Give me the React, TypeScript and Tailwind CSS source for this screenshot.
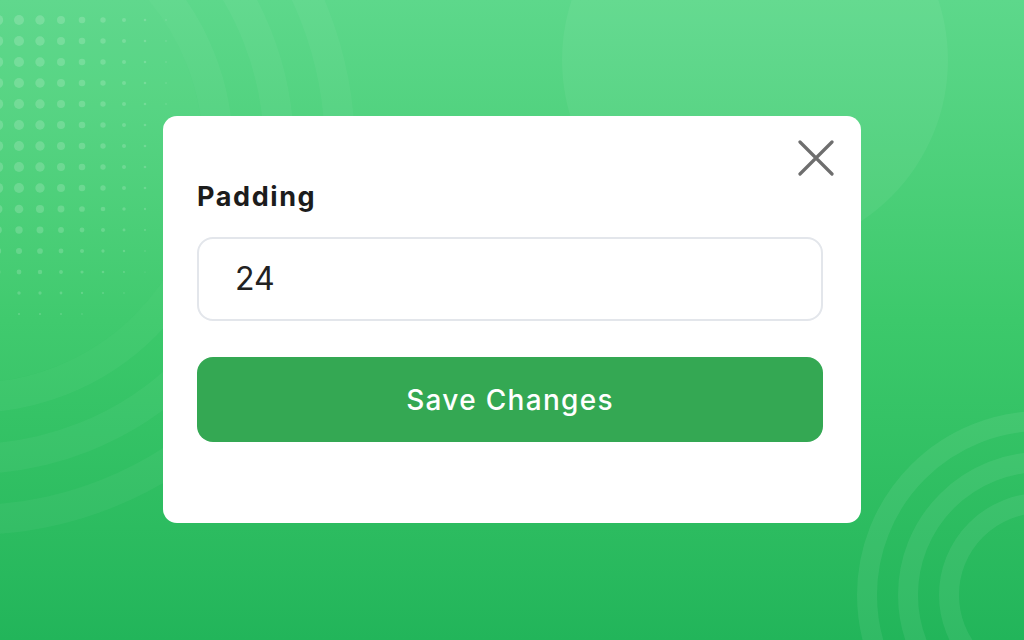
import React from "react";

function Dots() {
  const dots: React.ReactNode[] = [];
  const colR = [5.2, 5, 4.7, 4, 3.3, 2.7, 2, 1.3, 0.8];
  for (let i = 0; i < colR.length; i++) {
    for (let j = 0; j < 16; j++) {
      const x = -2 + i * 21;
      const y = 20 + j * 21;
      const f = j <= 8 ? 1 : Math.max(0, 1 - (j - 8) * 0.13);
      const r = colR[i] * f;
      if (r <= 0.6) continue;
      dots.push(<circle key={`${i}-${j}`} cx={x} cy={y} r={r} fill="white" fillOpacity={0.17} />);
    }
  }
  return <>{dots}</>;
}

function Background() {
  return (
    <svg className="absolute inset-0" width="1024" height="640" viewBox="0 0 1024 640">
      <circle cx="755" cy="60" r="193" fill="white" fillOpacity="0.05" />
      <g fill="none" stroke="white" strokeOpacity="0.04">
        <circle cx="-30" cy="150" r="248" strokeWidth="30" />
        <circle cx="-30" cy="150" r="309" strokeWidth="30" />
        <circle cx="-30" cy="150" r="370" strokeWidth="30" />
      </g>
      <circle cx="-30" cy="150" r="233" fill="white" fillOpacity="0.025" />
      <g fill="none" stroke="white" strokeOpacity="0.07">
        <circle cx="1041" cy="595" r="174" strokeWidth="20" />
        <circle cx="1041" cy="595" r="133" strokeWidth="20" />
        <circle cx="1041" cy="595" r="92" strokeWidth="20" />
      </g>
      <Dots />
    </svg>
  );
}

export default function App() {
  return (
    <div
      className="relative w-[1024px] h-[640px] overflow-hidden bg-gradient-to-b from-[#5dd88b] via-[#3cc96b] to-[#22b55a] flex items-center justify-center"
      style={{ fontFamily: "Inter, 'Noto Sans', sans-serif" }}
    >
      <Background />
      <div className="relative w-[698px] h-[407px] mt-[-1px] bg-white rounded-[14px] pl-[34px] pr-[38px] pt-[63px] flex flex-col">
        <button className="absolute right-[27px] top-[24px] w-[36px] h-[36px] flex items-center justify-center">
          <svg width="36" height="36" viewBox="0 0 36 36">
            <path d="M2 2 L34 34 M34 2 L2 34" stroke="#6e6e6e" strokeWidth="3.2" strokeLinecap="round" />
          </svg>
        </button>
        <label className="text-[27px] leading-[36px] font-bold text-[#1c1c1c] tracking-[1.6px]">Padding</label>
        <div className="mt-[22px] h-[84px] rounded-[16px] border-2 border-[#e3e6eb] flex items-center pl-[36px]">
          <span className="text-[32px] text-[#222] font-normal">24</span>
        </div>
        <button className="mt-[36px] h-[85px] rounded-[16px] bg-[#34a853] text-white text-[28px] font-medium tracking-[1.3px] flex items-center justify-center">
          Save Changes
        </button>
      </div>
    </div>
  );
}
